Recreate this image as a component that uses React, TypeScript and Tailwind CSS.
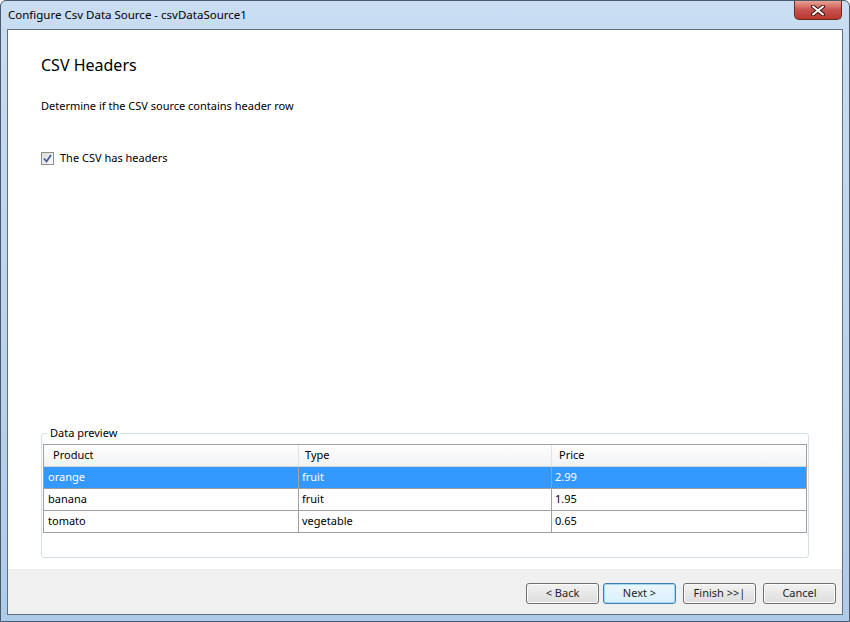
import React from 'react';

const rows = [
  { product: 'orange', type: 'fruit', price: '2.99', selected: true },
  { product: 'banana', type: 'fruit', price: '1.95', selected: false },
  { product: 'tomato', type: 'vegetable', price: '0.65', selected: false },
];

const WizardButton: React.FC<{ label: string; focused?: boolean }> = ({ label, focused }) => (
  <button
    className={`w-[73px] h-[21px] rounded-[3px] border text-[11px] text-[#1e1e1e] bg-gradient-to-b ${
      focused
        ? 'border-[#3c7fb1] from-[#eaf6fd] to-[#d9f0fc] shadow-[inset_0_0_0_1px_#a4d8f5]'
        : 'border-[#707070] from-[#f2f2f2] to-[#dddddd] shadow-[inset_0_0_0_1px_#fcfcfc]'
    }`}
  >
    {label}
  </button>
);

export default function App() {
  return (
    <div
      className="w-[850px] h-[622px] border border-[#4b5a6b] rounded-t-[6px] bg-gradient-to-b from-[#c9ddf3] via-[#bcd4ee] to-[#aecbea] flex flex-col px-[6px] pb-[6px]"
      style={{ fontFamily: '"Noto Sans", "Open Sans", sans-serif' }}
    >
      {/* title bar */}
      <div className="h-[28px] flex items-start justify-between">
        <span className="pl-[1px] pt-[6px] text-[11.5px] text-black leading-[16px]">Configure Csv Data Source - csvDataSource1</span>
        <div className="w-[48px] h-[19px] mr-[1px] rounded-b-[5px] border border-t-0 border-[#6b2a20] bg-gradient-to-b from-[#e8a493] via-[#c75050] to-[#b8392a] flex items-center justify-center">
          <svg width="14" height="11" viewBox="0 0 14 11">
            <path d="M2 1.5 L12 9.5 M12 1.5 L2 9.5" stroke="#3a1a14" strokeWidth="4" strokeLinecap="round" />
            <path d="M2 1.5 L12 9.5 M12 1.5 L2 9.5" stroke="#ffffff" strokeWidth="2" strokeLinecap="round" />
          </svg>
        </div>
      </div>

      {/* client area */}
      <div className="flex-1 border border-[#5f6f80] bg-white flex flex-col">
        <div className="flex-1 flex flex-col px-[33px] pt-[24px] pb-[11px]">
          <h1 className="text-[16px] text-black leading-[22px] font-normal">CSV Headers</h1>
          <p className="mt-[22px] text-[11px] text-black leading-[16px]">Determine if the CSV source contains header row</p>
          <label className="mt-[36px] flex items-center gap-[6px] text-[11px] text-black leading-[16px]">
            <span className="w-[13px] h-[13px] border border-[#8f8f8f] bg-gradient-to-br from-[#dcdcdc] to-[#fafafa] flex items-center justify-center">
              <svg width="9" height="9" viewBox="0 0 9 9">
                <path d="M1 4.5 L3.5 7.5 L8 1" stroke="#4a5f97" strokeWidth="1.8" fill="none" />
              </svg>
            </span>
            The CSV has headers
          </label>

          <div className="flex-1" />

          <fieldset className="border border-[#d5dfe5] rounded-[3px] px-[1px] pb-[24px] pt-[3px]">
            <legend className="ml-[4px] px-[3px] text-[11px] leading-[16px] text-black">Data preview</legend>
            <div className="border border-[#a0a0a0] border-b-0">
              <div className="flex h-[22px] bg-gradient-to-b from-[#ffffff] to-[#f1f2f4] border-b border-[#d5d5d5] text-[11px] text-black">
                <div className="w-[255px] pl-[9px] flex items-center border-r border-[#e2e3e5]">Product</div>
                <div className="w-[253px] pl-[6px] flex items-center border-r border-[#e2e3e5]">Type</div>
                <div className="flex-1 pl-[7px] flex items-center">Price</div>
              </div>
              {rows.map((r) => (
                <div
                  key={r.product}
                  className={`flex h-[22px] border-b border-[#a0a0a0] text-[11px] ${
                    r.selected ? 'bg-[#3399ff] text-white' : 'bg-white text-black'
                  }`}
                >
                  <div className="w-[255px] pl-[4px] flex items-center border-r border-[#a0a0a0]">{r.product}</div>
                  <div className="w-[253px] pl-[3px] flex items-center border-r border-[#a0a0a0]">{r.type}</div>
                  <div className="flex-1 pl-[3px] flex items-center">{r.price}</div>
                </div>
              ))}
            </div>
          </fieldset>
        </div>

        {/* footer */}
        <div className="h-[45px] bg-[#f0f0f0] flex items-start justify-end pt-[14px] pr-[6px]">
          <WizardButton label="< Back" />
          <div className="w-[4px]" />
          <WizardButton label="Next >" focused />
          <div className="w-[7px]" />
          <WizardButton label="Finish >>|" />
          <div className="w-[7px]" />
          <WizardButton label="Cancel" />
        </div>
      </div>
    </div>
  );
}
